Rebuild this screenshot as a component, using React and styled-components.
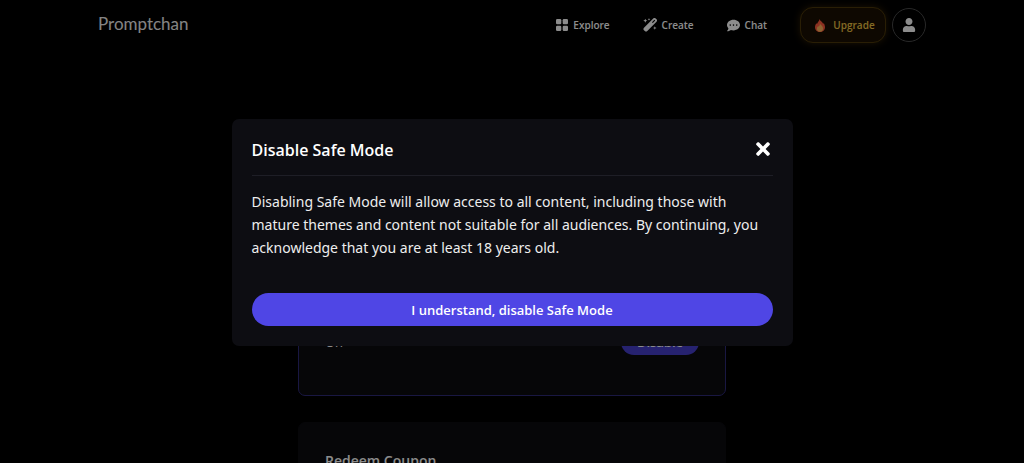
import React, { useState } from 'react'
import styled, { createGlobalStyle } from 'styled-components'
import { FaCommentDots, FaTimes, FaUser } from 'react-icons/fa'

export default function App() {
    const [ open, setOpen ] = useState(true)

    return (
        <>
            <GlobalStyle />
            <Header>
                <Logo href='#'>Promptchan</Logo>
                <Nav>
                    <NavItem href='#explore'><GridIcon />Explore</NavItem>
                    <NavItem href='#create'><WandIcon />Create</NavItem>
                    <NavItem href='#chat'><FaCommentDots size={13} />Chat</NavItem>
                    <Account>
                        <Upgrade type='button'><FlameIcon />Upgrade</Upgrade>
                        <Profile type='button' aria-label='Profile'><FaUser size={14} /></Profile>
                    </Account>
                </Nav>
            </Header>
            <Settings>
                <Card $active>
                    <CardTitle>Safe Mode</CardTitle>
                    <CardRow>
                        <span>On</span>
                        <SmallButton type='button' onClick={() => setOpen(true)}>Disable</SmallButton>
                    </CardRow>
                </Card>
                <Card>
                    <CardTitle>Redeem Coupon</CardTitle>
                </Card>
            </Settings>
            {open && (
                <Overlay>
                    <Dialog role='dialog' aria-modal='true' aria-labelledby='dialog-title'>
                        <DialogHeader>
                            <DialogTitle id='dialog-title'>Disable Safe Mode</DialogTitle>
                            <Close type='button' aria-label='Close' onClick={() => setOpen(false)}><FaTimes size={20} /></Close>
                        </DialogHeader>
                        <DialogText>
                            Disabling Safe Mode will allow access to all content, including those with
                            mature themes and content not suitable for all audiences. By continuing, you
                            acknowledge that you are at least 18 years old.
                        </DialogText>
                        <Confirm type='button' onClick={() => setOpen(false)}>I understand, disable Safe Mode</Confirm>
                    </Dialog>
                </Overlay>
            )}
        </>
    )
}

const GridIcon = () => (
    <svg width='12' height='12' viewBox='0 0 12 12' fill='currentColor' aria-hidden='true'>
        <rect width='5.3' height='5.3' rx='1.2' />
        <rect x='6.7' width='5.3' height='5.3' rx='1.2' />
        <rect y='6.7' width='5.3' height='5.3' rx='1.2' />
        <rect x='6.7' y='6.7' width='5.3' height='5.3' rx='1.2' />
    </svg>
)

const WandIcon = () => (
    <svg width='14' height='14' viewBox='0 0 14 14' fill='currentColor' aria-hidden='true'>
        <path d='M10.2.5a1.8 1.8 0 0 1 2.500 0l.8.8a1.800 1.800 0 0 1 0 2.500l-9.200 9.200a1.800 1.800 0 0 1-2.500 0l-.8-.8a1.800 1.800 0 0 1 0-2.500zM11.400 1.800 9 4.200l.8.8 2.400-2.400z' fillRule='evenodd' />
        <path d='M2.300.7l.6 1.400 1.400.6-1.400.6-.6 1.400-.6-1.400-1.400-.6 1.400-.6zM6 0l.4.9.9.4-.9.4-.4.9-.4-.9-.9-.4.9-.4zM11.800 8.200l.5 1.300 1.300.5-1.300.5-.5 1.300-.5-1.300-1.300-.5 1.300-.5z' />
    </svg>
)

const FlameIcon = () => (
    <svg width='10' height='13' viewBox='0 0 10 13' aria-hidden='true'>
        <path d='M4.300 0C4.800 1.700 7.600 2.900 8.200 5l.5-.9C9.500 5.500 10 7 10 8.200 10 11 7.800 13 5 13S0 11 0 8.200C0 6.500.7 5.200 1.500 4.200l.5.8C2.500 3 4.500 2.200 4.300 0z' fill='#ff5a3c' />
        <path d='M4.900 4.200c.4 1.700 3.200 2.700 3.200 5.300 0 2-1.400 3.300-3.100 3.300s-3.100-1.300-3.100-3.100c0-1.400.8-2.100 1.300-2.800l.5.800c.8-1 1.300-2 1.200-3.500z' fill='#ffb45c' />
    </svg>
)

const GlobalStyle = createGlobalStyle`
    * {
        box-sizing: border-box;
    }
    body {
        margin: 0;
        background: #000;
        color: #fff;
        font-family: 'Open Sans', 'Noto Sans', sans-serif;
        overflow: hidden;
    }
    button {
        font: inherit;
        color: inherit;
        border: 0;
        cursor: pointer;
    }
`

const Header = styled.header`
    display: flex;
    align-items: center;
    justify-content: space-between;
    max-width: 828px;
    height: 50px;
    margin: 0 auto;
`

const Logo = styled.a`
    color: #f0f0f0;
    font-family: Lato, sans-serif;
    font-size: 17px;
    line-height: 24px;
    padding-bottom: 2px;
    text-decoration: none;
`

const Nav = styled.nav`
    display: flex;
    align-items: center;
    gap: 33px;
`

const NavItem = styled.a`
    display: flex;
    align-items: center;
    gap: 5px;
    color: #fff;
    font-size: 10px;
    font-weight: 600;
    text-decoration: none;
`

const Account = styled.div`
    display: flex;
    align-items: center;
    gap: 6px;
`

const Upgrade = styled.button`
    display: flex;
    align-items: center;
    justify-content: center;
    gap: 8px;
    width: 86px;
    height: 36px;
    padding: 0 10px 0 14px;
    border: 1px solid #4c380a;
    border-radius: 13px;
    background: #1a0f02;
    box-shadow: 0 0 8px #342208;
    color: #f0c444;
    font-size: 10px;
    font-weight: 600;
`

const Profile = styled.button`
    display: flex;
    align-items: center;
    justify-content: center;
    width: 34px;
    height: 34px;
    padding: 0;
    border: 1px solid #4a4a4a;
    border-radius: 50%;
    background: #000;
`

const Settings = styled.main`
    display: flex;
    flex-direction: column;
    gap: 26px;
    width: 90%;
    max-width: 428px;
    margin: 0 auto;
    padding-top: 180px;
`

const Card = styled.section`
    min-height: 166px;
    padding: 26px;
    border: 1px solid ${({ $active }) => ($active ? '#2e2a78' : '#0b0b10')};
    border-radius: 7px;
    background: #0b0b10;
`

const CardTitle = styled.h2`
    margin: 0;
    font-size: 14px;
    font-weight: 600;
    line-height: 24px;
`

const CardRow = styled.div`
    display: flex;
    align-items: center;
    justify-content: space-between;
    padding-top: 48px;
    font-size: 13px;
`

const SmallButton = styled.button`
    width: 78px;
    height: 26px;
    padding: 0;
    border-radius: 13px;
    background: #463ecc;
    font-size: 13px;
    font-weight: 600;
`

const Overlay = styled.div`
    position: fixed;
    inset: 0;
    display: flex;
    align-items: center;
    justify-content: center;
    padding-top: 2px;
    background: rgba(0, 0, 0, .45);
`

const Dialog = styled.div`
    width: 90%;
    max-width: 561px;
    padding: 20px;
    border-radius: 7px;
    background: #0d0d12;
`

const DialogHeader = styled.div`
    display: flex;
    align-items: flex-start;
    justify-content: space-between;
    padding-bottom: 14px;
    border-bottom: 1px solid #1e1e26;
`

const DialogTitle = styled.h1`
    margin: 0;
    font-size: 16px;
    font-weight: 600;
    line-height: 22px;
`

const Close = styled.button`
    display: flex;
    padding: 0;
    background: none;
`

const DialogText = styled.p`
    margin: 14px 0 34px;
    color: #eee;
    font-family: 'Noto Sans', 'Open Sans', sans-serif;
    font-size: 14px;
    line-height: 23px;
`

const Confirm = styled.button`
    display: block;
    width: 100%;
    height: 33px;
    border-radius: 17px;
    background: #4f46e5;
    font-size: 13px;
    font-weight: 600;
`
